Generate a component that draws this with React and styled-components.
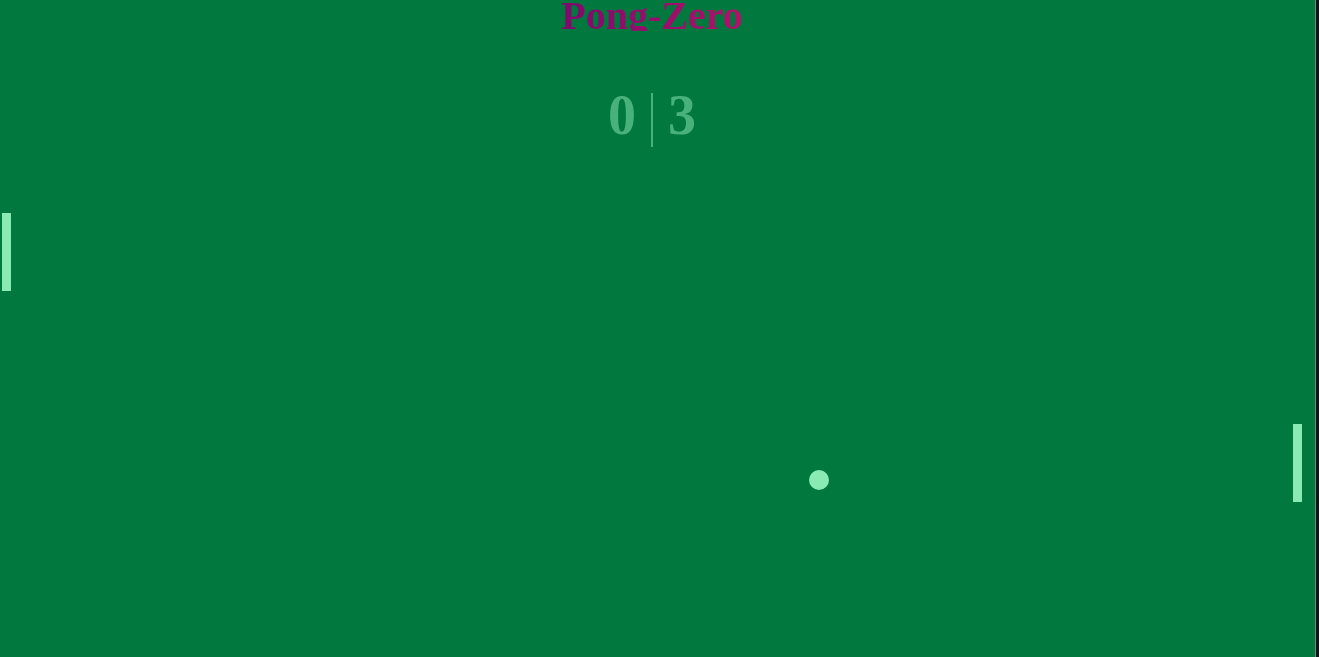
import React from 'react';
import styled, { createGlobalStyle } from 'styled-components';

const GlobalStyle = createGlobalStyle`
    html, body {
        margin: 0;
        padding: 0;
        background: #111312;
        overflow: hidden;
    }
    #root {
        height: 100vh;
    }
`

const paddles = [
    { side: 'left', x: 2, y: 213 },
    { side: 'right', x: 1293, y: 424 },
]

const ball = { x: 819, y: 480 }

export default function App() {
    const score = [0, 3]

    return (
        <>
            <GlobalStyle />
            <Board>
                <Header>
                    <Title>Pong-Zero</Title>
                    <Score>
                        <Digit>{score[0]}</Digit>
                        <Divider />
                        <Digit>{score[1]}</Digit>
                    </Score>
                </Header>
                {paddles.map(p => (
                    <Paddle key={p.side} style={{ left: p.x, top: p.y }} />
                ))}
                <Ball style={{ left: ball.x - 10, top: ball.y - 10 }} />
            </Board>
        </>
    )
}

const Board = styled.div`
    position: relative;
    width: 1315px;
    height: 100vh;
    background: #00783e;
    border-right: 1px solid #6f8a7c;
`

const Header = styled.div`
    width: 1304px;
    display: flex;
    flex-direction: column;
    align-items: center;
`

const Title = styled.h1`
    margin: 0;
    font-family: "Liberation Serif", "Times New Roman", serif;
    font-size: 40px;
    font-weight: 700;
    line-height: 31px;
    background: linear-gradient(90deg, #7e0a6c, #b4106a);
    -webkit-background-clip: text;
    background-clip: text;
    color: transparent;
`

const Score = styled.div`
    margin-top: 62px;
    display: flex;
    align-items: flex-start;
`

const Digit = styled.span`
    font-family: "Liberation Serif", "Times New Roman", serif;
    font-size: 56px;
    font-weight: 700;
    line-height: 44px;
    color: #48b27a;
`

const Divider = styled.span`
    width: 2px;
    height: 54px;
    margin: 0 15px;
    background: #48b27a;
`

const Paddle = styled.div`
    position: absolute;
    width: 9px;
    height: 78px;
    background: #8aeab4;
`

const Ball = styled.div`
    position: absolute;
    width: 20px;
    height: 20px;
    border-radius: 50%;
    background: #8aeab4;
`
